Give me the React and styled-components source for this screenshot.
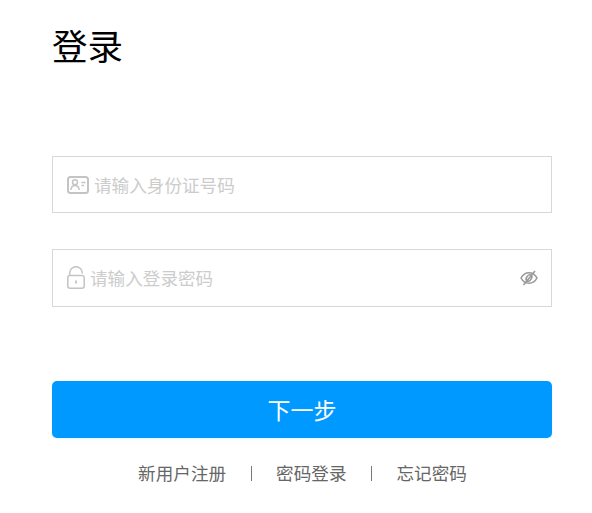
import styled, { createGlobalStyle } from "styled-components";

const GlobalStyle = createGlobalStyle`
  html, body {
    margin: 0;
    padding: 0;
    background: #fff;
    font-family: "Noto Sans CJK SC", "Liberation Sans", sans-serif;
  }
`;

function CardIcon() {
  return (
    <svg width="22" height="18" viewBox="0 0 22 18" fill="none" stroke="#c4c4c4">
      <rect x="1" y="1" width="20" height="16" rx="2.500" strokeWidth="2" />
      <circle cx="8" cy="6.300" r="2.500" strokeWidth="1.500" />
      <path d="M3.800 14c.4-2.800 2.100-4.400 4.200-4.400s3.800 1.600 4.200 4.400" strokeWidth="1.500" />
      <path d="M14.500 6.500h4M14.500 9.500h2.500" strokeWidth="1.300" />
    </svg>
  );
}

function LockIcon() {
  return (
    <svg width="18" height="23" viewBox="0 0 18 23" fill="none" stroke="#c4c4c4" strokeWidth="1.500">
      <path d="M2.700 9.500V7a6.300 6.300 0 0 1 12.600 0v.6" />
      <rect x="0.800" y="9.500" width="16.400" height="12.700" rx="2.200" />
      <path d="M9 14.500v3" strokeWidth="1.800" />
    </svg>
  );
}

function EyeOffIcon() {
  return (
    <svg width="18" height="16" viewBox="0 0 18 16" fill="none" stroke="#999" strokeWidth="1.600">
      <path d="M1 8c1.800-3.400 4.600-5.200 8-5.200s6.200 1.800 8 5.200c-1.800 3.400-4.600 5.200-8 5.200S2.800 11.400 1 8z" />
      <ellipse cx="9" cy="8" rx="2.400" ry="3.400" transform="rotate(35 9 8)" />
      <path d="M15 1 3.500 15" />
    </svg>
  );
}

export default function App() {
  return (
    <Page>
      <GlobalStyle />
      <Title>登录</Title>
      <Fields>
        <Field $height={57} $bottom={0}>
          <IconSlot><CardIcon /></IconSlot>
          <Input placeholder="请输入身份证号码" />
        </Field>
        <Field $height={58} $bottom={1}>
          <IconSlot><LockIcon /></IconSlot>
          <Input type="password" placeholder="请输入登录密码" />
          <EyeButton><EyeOffIcon /></EyeButton>
        </Field>
      </Fields>
      <SubmitButton>下一步</SubmitButton>
      <Links>
        <LinkItem>新用户注册</LinkItem>
        <Divider />
        <LinkItem>密码登录</LinkItem>
        <Divider />
        <LinkItem>忘记密码</LinkItem>
      </Links>
    </Page>
  );
}

const Page = styled.div`
  width: 500px;
  height: 513px;
  box-sizing: border-box;
  margin-left: 52px;
  padding-top: 19px;
`;
const Title = styled.h1`
  margin: 0;
  height: 52px;
  line-height: 52px;
  font-size: 35.500px;
  font-weight: 400;
  color: #000;
`;
const Fields = styled.div`
  display: flex;
  flex-direction: column;
  gap: 36px;
  margin-top: 85px;
`;
const Field = styled.div`
  display: flex;
  align-items: center;
  box-sizing: border-box;
  height: ${(p) => p.$height}px;
  padding: 0 13px ${(p) => p.$bottom}px 14px;
  border: 1px solid #d8d8d8;
`;
const IconSlot = styled.span`
  display: flex;
  flex: none;
  margin-right: 5px;
`;
const Input = styled.input`
  flex: 1;
  min-width: 0;
  border: 0;
  outline: 0;
  padding: 0;
  font-family: inherit;
  font-size: 17.600px;
  color: #333;
  &::placeholder {
    color: #ccc;
    opacity: 1;
  }
`;
const EyeButton = styled.span`
  display: flex;
  flex: none;
`;
const SubmitButton = styled.button`
  display: block;
  width: 100%;
  height: 57px;
  margin-top: 74px;
  padding: 0 0 2px;
  border: 0;
  border-radius: 5px;
  background: #0099ff;
  color: #fff;
  font-family: inherit;
  font-size: 23px;
  box-shadow: 0 1px 2px rgba(0, 153, 255, 0.12);
`;
const Links = styled.div`
  display: flex;
  justify-content: center;
  align-items: center;
  margin: 22px 0 0 1px;
  gap: 24.500px;
`;
const LinkItem = styled.a`
  font-size: 17.600px;
  line-height: 26px;
  color: #666;
`;
const Divider = styled.span`
  width: 1px;
  height: 15px;
  background: #777;
`;
